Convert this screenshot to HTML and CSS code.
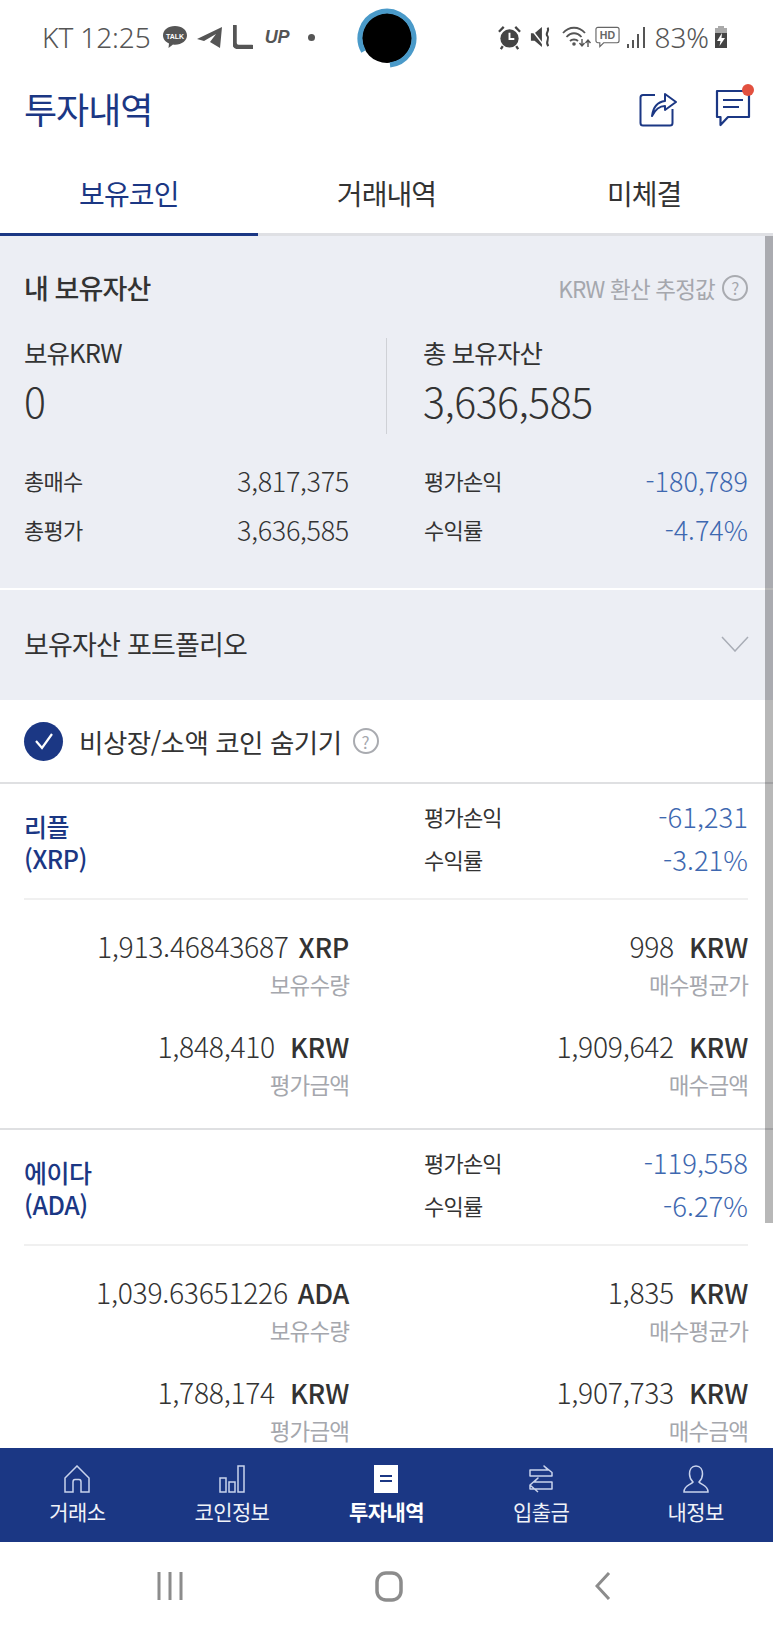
FILE: index.html
```html
<!DOCTYPE html>
<html lang="ko">
<head>
  <meta charset="UTF-8">
  <title>투자내역</title>
  <link rel="stylesheet" href="styles.css">
</head>
<body>
<div class="phone">

  <!-- Status bar -->
  <div class="status-bar">
    <div class="status-left">
      <span class="status-text">KT 12:25</span>
      <svg class="ico-talk" viewBox="0 0 26 26"><path d="M13 2C6 2 1 6 1 11.500C1 15 3.500 18 7 19.500L6.500 24L11 20.500C11.700 20.700 12.300 20.700 13 20.700C20 20.700 25 16.500 25 11.500C25 6 20 2 13 2Z" fill="#555"/><text x="13" y="14.500" class="talk-label">TALK</text></svg>
      <svg class="ico-tg" viewBox="0 0 26 21"><path d="M0 12L25 0L23 21L13 15L19 7L7 14Z" fill="#555"/></svg>
      <svg class="ico-l" viewBox="0 0 20 24"><path d="M1.500 1V18C1.500 20.500 3 22 5.500 22H19" fill="none" stroke="#555" stroke-width="4.500" stroke-linecap="round"/></svg>
      <span class="status-up">UP</span>
      <span class="status-dot"></span>
    </div>
    <div class="status-right">
      <svg class="ico-alarm" viewBox="0 0 26 26"><circle cx="13" cy="14" r="9.500" fill="#444"/><path d="M13 8V14.500H18" stroke="#fff" stroke-width="2" fill="none"/><path d="M2 7L7 2M24 7L19 2M6 22L4 25M20 22L22 25" stroke="#444" stroke-width="2.400"/></svg>
      <svg class="ico-mute" viewBox="0 0 24 24"><path d="M1 8H5L13 1V23L5 16H1Z" fill="#444"/><path d="M1 3L15 21" stroke="#fff" stroke-width="1.500"/><path d="M19 2C22 5 16 8 19 11C22 14 16 17 20 22" stroke="#444" stroke-width="2.200" fill="none"/></svg>
      <svg class="ico-wifi" viewBox="0 0 29 24"><path d="M1 8C7 1 17 1 23 8M4.500 12C9 7 15 7 19.500 12M8 16C10 14 14 14 16 16" stroke="#555" stroke-width="1.800" fill="none"/><circle cx="12" cy="19" r="1.800" fill="#555"/><path d="M20 14V20M17.500 18L20 21L22.500 18M26 22V16M23.500 18L26 15L28.500 18" stroke="#555" stroke-width="1.400" fill="none"/></svg>
      <svg class="ico-hd" viewBox="0 0 26 24"><path d="M3 2H23C24 2 25 3 25 4V16C25 17 24 18 23 18H9L5 22V18H3C2 18 1 17 1 16V4C1 3 2 2 3 2Z" fill="none" stroke="#666" stroke-width="1.200"/><text x="13" y="14" class="hd-label">HD</text></svg>
      <svg class="ico-signal" viewBox="0 0 20 24"><path d="M2 19V23M7 15V23M12 9V23M18 2V23" stroke="#555" stroke-width="2"/></svg>
      <span class="status-text">83%</span>
      <svg class="ico-batt" viewBox="0 0 14 24"><path d="M4 1H10V3H13V23H1V3H4Z" fill="#aaa"/><path d="M1 8H13V23H1Z" fill="#444"/><path d="M8 8L3 16H6.500L5.500 21L11 13H7.500Z" fill="#fff"/></svg>
    </div>
    <svg class="camera-dot" viewBox="0 0 60 60"><circle cx="30" cy="30" r="25" fill="#000"/><path d="M33 57A27 27 0 1 0 6.500 43.500" fill="none" stroke="#4a9ac9" stroke-width="5"/></svg>
  </div>

  <!-- Header -->
  <header class="app-header">
    <h1>투자내역</h1>
    <div class="header-icons">
      <svg class="ico-share" viewBox="0 0 38 38"><path d="M16 6H4C2.500 6 1.500 7 1.500 8.500V34C1.500 35.500 2.500 36.500 4 36.500H31C32.500 36.500 33.500 35.500 33.500 34V20" fill="none" stroke="#1b3784" stroke-width="2"/><path d="M13 27C14 19 18 13 26 12V5L37 13L26 21V17C20 17 16 21 13 27Z" fill="#fff" stroke="#1b3784" stroke-width="2" stroke-linejoin="round"/></svg>
      <div class="ico-msg-wrap">
        <svg class="ico-msg" viewBox="0 0 36 38"><path d="M2 2H34V28H13L5.500 36V28H2Z" fill="none" stroke="#1b3784" stroke-width="2.200" stroke-linejoin="round"/><path d="M8 11H28M8 18H24" stroke="#1b3784" stroke-width="2.200"/></svg>
        <span class="badge"></span>
      </div>
    </div>
  </header>

  <!-- Tabs -->
  <nav class="tabs">
    <div class="tab active">보유코인</div>
    <div class="tab">거래내역</div>
    <div class="tab">미체결</div>
  </nav>

  <div class="content">
    <div class="scroll-thumb"></div>

    <!-- Summary -->
    <section class="summary">
      <div class="summary-head">
        <h2>내 보유자산</h2>
        <div class="estimate">KRW 환산 추정값 <span class="help">?</span></div>
      </div>
      <div class="totals">
        <div class="total-col">
          <div class="total-label">보유KRW</div>
          <div class="total-value">0</div>
        </div>
        <div class="total-col right">
          <div class="total-label">총 보유자산</div>
          <div class="total-value">3,636,585</div>
        </div>
      </div>
      <div class="stats">
        <div class="stat"><span>총매수</span><span>3,817,375</span></div>
        <div class="stat"><span>평가손익</span><span class="minus">-180,789</span></div>
        <div class="stat"><span>총평가</span><span>3,636,585</span></div>
        <div class="stat"><span>수익률</span><span class="minus">-4.74%</span></div>
      </div>
    </section>

    <div class="portfolio">
      <span>보유자산 포트폴리오</span>
      <svg class="chevron" viewBox="0 0 28 16"><path d="M1 1L14 15L27 1" fill="none" stroke="#a9adb6" stroke-width="1.500"/></svg>
    </div>

    <!-- Hide small coins -->
    <div class="hide-row">
      <span class="check"><svg viewBox="0 0 20 20"><path d="M2 10L8 17L18 3" fill="none" stroke="#fff" stroke-width="2.200"/></svg></span>
      <span class="hide-text">비상장/소액 코인 숨기기</span>
      <span class="help">?</span>
    </div>

    <!-- Coin list -->
    <section class="coin">
      <div class="coin-top">
        <div class="coin-name">리플<br>(XRP)</div>
        <div class="coin-pnl">
          <div class="pnl-row"><span>평가손익</span><span class="minus">-61,231</span></div>
          <div class="pnl-row"><span>수익률</span><span class="minus">-3.21%</span></div>
        </div>
      </div>
      <div class="coin-grid">
        <div class="cell"><div class="cell-val">1,913.46843687<b>XRP</b></div><div class="cell-label">보유수량</div></div>
        <div class="cell"><div class="cell-val">998<b class="krw">KRW</b></div><div class="cell-label">매수평균가</div></div>
        <div class="cell"><div class="cell-val">1,848,410<b class="krw">KRW</b></div><div class="cell-label">평가금액</div></div>
        <div class="cell"><div class="cell-val">1,909,642<b class="krw">KRW</b></div><div class="cell-label">매수금액</div></div>
      </div>
    </section>

    <section class="coin">
      <div class="coin-top">
        <div class="coin-name">에이다<br>(ADA)</div>
        <div class="coin-pnl">
          <div class="pnl-row"><span>평가손익</span><span class="minus">-119,558</span></div>
          <div class="pnl-row"><span>수익률</span><span class="minus">-6.27%</span></div>
        </div>
      </div>
      <div class="coin-grid">
        <div class="cell"><div class="cell-val">1,039.63651226<b>ADA</b></div><div class="cell-label">보유수량</div></div>
        <div class="cell"><div class="cell-val">1,835<b class="krw">KRW</b></div><div class="cell-label">매수평균가</div></div>
        <div class="cell"><div class="cell-val">1,788,174<b class="krw">KRW</b></div><div class="cell-label">평가금액</div></div>
        <div class="cell"><div class="cell-val">1,907,733<b class="krw">KRW</b></div><div class="cell-label">매수금액</div></div>
      </div>
    </section>
  </div>

  <!-- Bottom menu -->
  <nav class="bottom-nav">
    <div class="nav-item">
      <svg viewBox="0 0 28 28"><path d="M2 13L14 1L26 13V27H18V17C18 15.500 17 14.500 16 14.500H12C11 14.500 10 15.500 10 17V27H2Z" fill="none" stroke="#c9d3ec" stroke-width="1.500"/></svg>
      <span>거래소</span>
    </div>
    <div class="nav-item">
      <svg viewBox="0 0 28 28"><path d="M2 13H8V27H2ZM11 17H17V27H11ZM20 1H26V27H20Z" fill="none" stroke="#c9d3ec" stroke-width="1.500"/></svg>
      <span>코인정보</span>
    </div>
    <div class="nav-item active">
      <svg viewBox="0 0 28 28"><path d="M2 0H26V28H2Z" fill="#fff"/><path d="M8 11H20M8 16H20" stroke="#1b3784" stroke-width="2"/></svg>
      <span>투자내역</span>
    </div>
    <div class="nav-item">
      <svg viewBox="0 0 28 28"><path d="M3 5H21L17 1L25 7.500V11H3ZM25 17H7L11 13L3 20V24H25ZM3 20L11 27" fill="none" stroke="#c9d3ec" stroke-width="1.500" stroke-linejoin="round"/></svg>
      <span>입출금</span>
    </div>
    <div class="nav-item">
      <svg viewBox="0 0 28 28"><path d="M14 1C9.500 1 7.500 5 7.500 9C7.500 12 9 15 11 17C9 20 2 20 2 27H26C26 20 19 20 17 17C19 15 20.500 12 20.500 9C20.500 5 18.500 1 14 1Z" fill="none" stroke="#c9d3ec" stroke-width="1.500"/></svg>
      <span>내정보</span>
    </div>
  </nav>

  <!-- Android nav -->
  <div class="system-nav">
    <svg class="sys-recent" viewBox="0 0 26 28"><path d="M2 0V28M13 0V28M24 0V28" stroke="#8c8c8c" stroke-width="3"/></svg>
    <svg class="sys-home" viewBox="0 0 28 31"><rect x="2" y="2" width="24" height="27" rx="9" fill="none" stroke="#8c8c8c" stroke-width="3.500"/></svg>
    <svg class="sys-back" viewBox="0 0 16 28"><path d="M14 1L2 14L14 27" fill="none" stroke="#8c8c8c" stroke-width="3"/></svg>
  </div>
</div>
</body>
</html>
```

FILE: styles.css
```css
* {
  box-sizing: border-box;
}

body {
  margin: 0;
  background: #fff;
  font-family: "Noto Sans CJK KR", "Noto Sans", sans-serif;
  color: #333;
}

.phone {
  width: 773px;
  height: 1632px;
  overflow: hidden;
  display: flex;
  flex-direction: column;
}

/* status bar */
.status-bar {
  position: relative;
  height: 74px;
  flex: none;
  padding: 0 45px 0 42px;
  display: flex;
  justify-content: space-between;
  align-items: center;
  color: #555;
}

.status-left,
.status-right {
  display: flex;
  align-items: center;
}

.status-text {
  font-family: "Noto Sans", sans-serif;
  font-size: 28px;
  font-weight: 300;
  letter-spacing: -0.1px;
}

.status-left svg,
.status-right svg {
  display: block;
}

.ico-talk { width: 26px; height: 26px; margin-left: 11px; }
.talk-label { font: 700 7px "Liberation Sans", sans-serif; fill: #fff; text-anchor: middle; }
.hd-label { font: 700 11px "Liberation Sans", sans-serif; fill: #666; text-anchor: middle; }
.ico-tg { width: 26px; height: 21px; margin-left: 9px; }
.ico-l { width: 20px; height: 24px; margin-left: 10px; }

.status-up {
  margin-left: 12px;
  font: italic 700 18px "Liberation Sans", sans-serif;
  color: #555;
}

.status-dot {
  width: 7px;
  height: 7px;
  margin-left: 18px;
  border-radius: 50%;
  background: #555;
}

.ico-alarm { width: 25px; height: 25px; }
.ico-mute { width: 22px; height: 22px; margin-left: 8px; }
.ico-wifi { width: 29px; height: 24px; margin-left: 10px; }
.ico-hd { width: 25px; height: 24px; margin-left: 4px; }
.ico-signal { width: 20px; height: 24px; margin-left: 6px; }
.status-right .status-text { margin-left: 9px; }
.ico-batt { width: 14px; height: 24px; margin-left: 5px; }

.status-bar .camera-dot {
  position: absolute;
  left: 357px;
  top: 8px;
  width: 60px;
  height: 60px;
}

/* header */
.app-header {
  height: 74px;
  flex: none;
  padding: 0 22px 6px 24px;
  display: flex;
  justify-content: space-between;
  align-items: center;
}

.app-header h1 {
  margin: 0;
  font-size: 36px;
  font-weight: 400;
  letter-spacing: -1px;
  color: #1b3784;
}

.header-icons {
  display: flex;
  align-items: center;
  gap: 38px;
}

.ico-share { width: 38px; height: 38px; display: block; }
.ico-msg-wrap { position: relative; }
.ico-msg { width: 36px; height: 38px; display: block; }

.badge {
  position: absolute;
  top: -5px;
  right: -3px;
  width: 12px;
  height: 12px;
  border-radius: 50%;
  background: #e2503f;
}

/* tabs */
.tabs {
  height: 88px;
  flex: none;
  display: flex;
  padding-top: 4px;
  border-bottom: 3px solid #dfe0e4;
}

.tab {
  flex: 1;
  margin-bottom: -3px;
  display: flex;
  justify-content: center;
  align-items: center;
  font-size: 28px;
  letter-spacing: -0.9px;
  color: #333;
  border-bottom: 3px solid transparent;
}

.tab.active {
  color: #1b3784;
  border-bottom-color: #1b3784;
}

.content {
  position: relative;
  flex: 1;
  overflow: hidden;
}

.scroll-thumb {
  position: absolute;
  top: 0;
  right: 0;
  width: 8px;
  height: 987px;
  background: rgba(0, 0, 0, 0.28);
}

/* summary */
.summary {
  height: 354px;
  padding: 32px 25px 0 24px;
  background: #eceef4;
  border-bottom: 2px solid #fff;
}

.summary-head {
  display: flex;
  justify-content: space-between;
  align-items: center;
}

.summary-head h2 {
  margin: 0;
  font-size: 27px;
  font-weight: 500;
  letter-spacing: -0.9px;
  color: #333;
}

.estimate {
  display: flex;
  align-items: center;
  gap: 7px;
  font-size: 22.500px;
  letter-spacing: -0.8px;
  color: #a5a7ad;
}

.help {
  width: 26px;
  height: 26px;
  flex: none;
  display: inline-flex;
  justify-content: center;
  align-items: center;
  border: 2px solid #a9abb0;
  border-radius: 50%;
  font-size: 17px;
  line-height: 1;
  color: #a5a7ad;
}

.totals {
  display: flex;
  margin-top: 31px;
}

.total-col {
  width: 362px;
  height: 96px;
}

.total-col.right {
  padding-left: 36px;
  border-left: 1px solid #cfd1d6;
}

.total-label {
  font-size: 25.500px;
  line-height: 28px;
  letter-spacing: -0.9px;
}

.total-value {
  margin-top: 9px;
  font-size: 41px;
  font-weight: 300;
  line-height: 50px;
  letter-spacing: -0.5px;
}

.stats {
  display: grid;
  grid-template-columns: 325px 324px;
  column-gap: 75px;
  row-gap: 11px;
  margin-top: 27px;
}

.stat {
  display: flex;
  justify-content: space-between;
  align-items: center;
  height: 38px;
  font-size: 22px;
  letter-spacing: -0.8px;
}

.stat span:last-child {
  font-size: 27px;
  font-weight: 300;
  letter-spacing: -0.3px;
}

.minus,
.stat span.minus {
  color: #3e68b0;
  letter-spacing: 0;
}

.portfolio {
  height: 110px;
  padding: 0 24px 3px;
  display: flex;
  justify-content: space-between;
  align-items: center;
  background: #eceef4;
  font-size: 27px;
  letter-spacing: -0.8px;
}

.chevron { width: 28px; height: 16px; }

.hide-row {
  height: 84px;
  padding: 0 24px;
  display: flex;
  align-items: center;
  border-bottom: 2px solid #dfe0e2;
}

.check {
  width: 39px;
  height: 39px;
  flex: none;
  display: flex;
  justify-content: center;
  align-items: center;
  border-radius: 50%;
  background: #1b3784;
}

.check svg { width: 20px; height: 20px; }

.hide-text {
  margin: 0 11px 0 16px;
  font-size: 26.500px;
  letter-spacing: -0.5px;
}

/* coin */
.coin {
  padding: 0 25px 0 24px;
  border-bottom: 2px solid #dfe0e2;
}

.coin-top {
  display: flex;
  height: 116px;
  padding-top: 10px;
  border-bottom: 2px solid #f0f0f0;
}

.coin-name {
  width: 400px;
  padding-top: 16px;
  font-size: 25px;
  font-weight: 500;
  line-height: 32px;
  letter-spacing: -0.5px;
  color: #1b3784;
}

.coin-pnl {
  flex: 1;
}

.pnl-row {
  display: flex;
  justify-content: space-between;
  align-items: center;
  height: 43px;
  font-size: 22px;
  letter-spacing: -0.8px;
}

.pnl-row span:last-child {
  font-size: 27.500px;
  font-weight: 300;
}

.coin-grid {
  display: grid;
  grid-template-columns: 325px 399px;
  align-content: start;
  padding-top: 27px;
  row-gap: 25px;
  height: 228px;
}

.cell {
  text-align: right;
}

.cell-val {
  font-size: 28.300px;
  font-weight: 300;
  line-height: 38px;
  letter-spacing: -0.3px;
}

.cell-val b {
  margin-left: 10px;
  font-size: 27px;
  font-weight: 500;
}

.cell-val b.krw {
  margin-left: 15px;
}

.cell-label {
  font-size: 22.500px;
  line-height: 36px;
  letter-spacing: -0.9px;
  color: #a5a7ad;
}

/* bottom nav */
.bottom-nav {
  height: 94px;
  flex: none;
  display: grid;
  grid-template-columns: repeat(5, 1fr);
  align-items: center;
  background: #1b3784;
}

.nav-item {
  display: flex;
  flex-direction: column;
  align-items: center;
  font-size: 21px;
  letter-spacing: -0.6px;
  color: #f0f2f8;
}

.nav-item svg {
  width: 28px;
  height: 28px;
  display: block;
  margin-bottom: 3px;
}

.nav-item span {
  line-height: 30px;
}

.nav-item.active {
  color: #fff;
  font-weight: 700;
}

.system-nav {
  height: 90px;
  flex: none;
  display: flex;
  justify-content: space-between;
  align-items: center;
  padding: 0 162px 2px 157px;
}

.sys-recent { width: 26px; height: 28px; }
.sys-home { width: 28px; height: 31px; }
.sys-back { width: 16px; height: 28px; }
```
